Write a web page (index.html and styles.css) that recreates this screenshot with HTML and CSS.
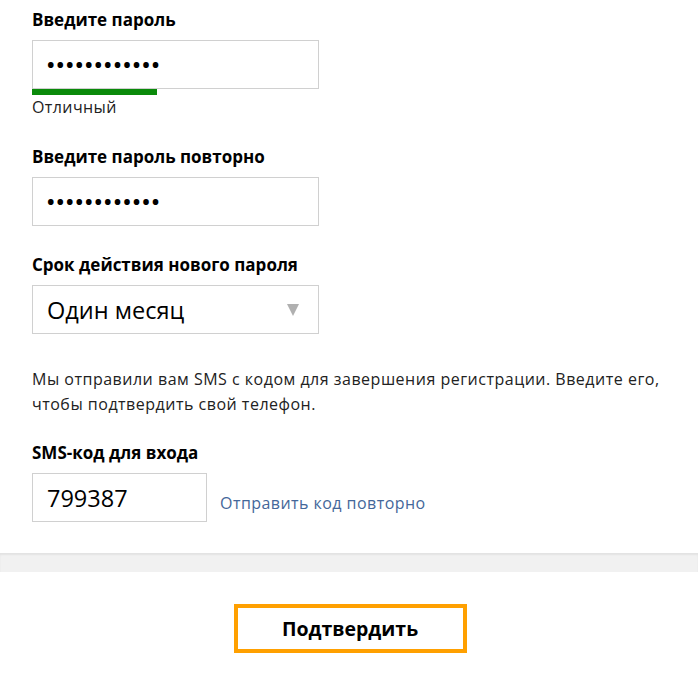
FILE: index.html
```html
<!DOCTYPE html>
<html lang="ru">

<head>
  <meta charset="utf-8" />
  <title>Регистрация</title>
  <link rel="stylesheet" href="styles.css">
</head>

<body>
  <main class="form">
    <div class="field">
      <div class="field-label">Введите пароль</div>
      <div class="input input-pass">••••••••••••</div>
      <div class="strength"><div class="strength-bar"></div></div>
      <div class="strength-text">Отличный</div>
    </div>

    <div class="field field-repeat">
      <div class="field-label">Введите пароль повторно</div>
      <div class="input input-pass">••••••••••••</div>
    </div>

    <div class="field field-term">
      <div class="field-label">Срок действия нового пароля</div>
      <div class="input select">
        <span>Один месяц</span>
        <span class="select-arrow"></span>
      </div>
    </div>

    <p class="note">Мы отправили вам SMS с кодом для завершения регистрации. Введите его, чтобы подтвердить свой телефон.</p>

    <div class="field field-sms">
      <div class="field-label">SMS-код для входа</div>
      <div class="sms-row">
        <div class="input input-code">799387</div>
        <a class="resend" href="#">Отправить код повторно</a>
      </div>
    </div>
  </main>

  <div class="band"></div>

  <footer class="footer">
    <button class="submit">Подтвердить</button>
  </footer>
</body>

</html>
```

FILE: styles.css
```css
* {
  box-sizing: border-box;
}

body {
  margin: 0;
  background: #fff;
  color: #000;
  font-family: "Open Sans", "Noto Sans", sans-serif;
}

.form {
  padding: 9px 0 31px 32px;
}

.field-label {
  font-size: 17px;
  font-weight: 700;
  line-height: 22px;
  margin-bottom: 9px;
}

.input {
  width: 287px;
  height: 49px;
  border: 1px solid #d0d0d0;
  display: flex;
  align-items: center;
  padding: 0 14px;
  font-size: 23.5px;
}

.input-pass {
  font-size: 20px;
  font-weight: 700;
  letter-spacing: 2px;
}

.strength {
  width: 287px;
  height: 6px;
}

.strength-bar {
  width: 125px;
  height: 6px;
  background: #0a8a0a;
}

.strength-text {
  font-size: 16px;
  line-height: 20px;
  letter-spacing: 0.4px;
  margin-top: 2px;
  color: #222;
}

.field-repeat {
  margin-top: 29px;
}

.field-term {
  margin-top: 28px;
}

.select {
  justify-content: space-between;
  padding-right: 19px;
}

.select-arrow {
  width: 0;
  height: 0;
  border-left: 6px solid transparent;
  border-right: 6px solid transparent;
  border-top: 12px solid #b0b0b0;
}

.note {
  margin: 33px 0 0;
  font-size: 16px;
  line-height: 25px;
  letter-spacing: 0.5px;
  color: #222;
  padding-right: 20px;
}

.field-sms {
  margin-top: 25px;
}

.sms-row {
  display: flex;
  align-items: center;
}

.input-code {
  width: 175px;
}

.resend {
  margin: 10px 0 0 13px;
  font-size: 16px;
  letter-spacing: 0.45px;
  color: #44679a;
  text-decoration: none;
}

.band {
  height: 19px;
  background: #f1f1f1;
  box-shadow: inset 0 2px 2px rgba(0, 0, 0, 0.06);
}

.footer {
  display: flex;
  justify-content: center;
  padding-top: 32px;
}

.submit {
  width: 233px;
  height: 49px;
  margin-left: 2px;
  border: 4px solid #ffa000;
  background: #fff;
  font-family: "Open Sans", "Noto Sans", sans-serif;
  font-size: 19.5px;
  font-weight: 700;
  color: #000;
}
```
